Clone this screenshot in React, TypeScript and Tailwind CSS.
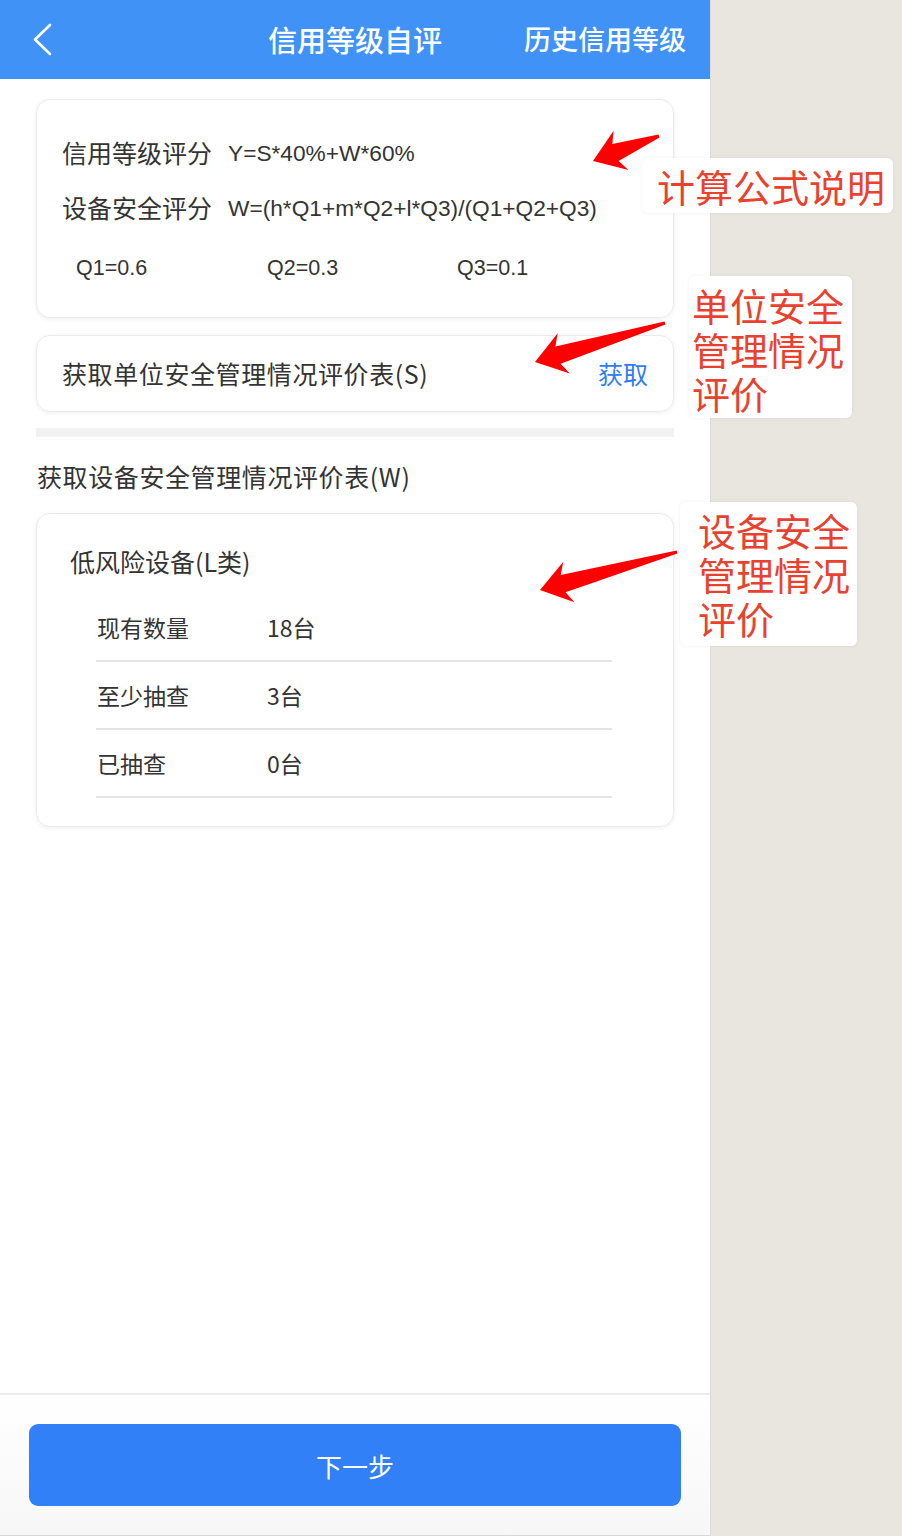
import React from 'react';

const cjk = "font-['Noto_Sans_CJK_SC',sans-serif]";
const latin = "font-['Liberation_Sans','Noto_Sans_CJK_SC',sans-serif]";

// red annotation arrow, tip -> tail, swept-back head
function arrowPoints(tip: [number, number], tail: [number, number]) {
  const dx = tail[0] - tip[0];
  const dy = tail[1] - tip[1];
  const len = Math.hypot(dx, dy);
  const ux = dx / len;
  const uy = dy / len;
  const nx = -uy;
  const ny = ux;
  const local: [number, number][] = [
    [0, 0],
    [30, -21],
    [24, -9],
    [len, -1.5],
    [len, 1.5],
    [24, 9],
    [30, 21],
  ];
  return local
    .map(([a, p]) => `${(tip[0] + ux * a + nx * p).toFixed(1)},${(tip[1] + uy * a + ny * p).toFixed(1)}`)
    .join(' ');
}

function Note({ lines, className }: { lines: string[]; className: string }) {
  return (
    <div className={`absolute bg-white rounded-[6px] shadow-[0_0_4px_rgba(0,0,0,0.06)] text-[38px] text-[#ea412e] ${cjk} ${className}`}>
      {lines.map((l) => (
        <div key={l} className="h-[44px] leading-[44px]">
          {l}
        </div>
      ))}
    </div>
  );
}

function Annotations() {
  return (
    <div className="absolute inset-0 pointer-events-none">
      <svg className="absolute inset-0" width="902" height="1536">
        <polygon points={arrowPoints([593, 161], [659, 136])} fill="#ff0000" />
        <polygon points={arrowPoints([535, 362], [665, 323])} fill="#ff0000" />
        <polygon points={arrowPoints([540, 590], [677, 552])} fill="#ff0000" />
      </svg>
      <Note lines={['计算公式说明']} className="left-[642px] top-[158px] w-[251px] h-[55px] pl-[15px] pt-[6px]" />
      <Note lines={['单位安全', '管理情况', '评价']} className="left-[689px] top-[276px] w-[163px] h-[142px] pl-[3px] pt-[7px]" />
      <Note lines={['设备安全', '管理情况', '评价']} className="left-[680px] top-[502px] w-[177px] h-[144px] pl-[18px] pt-[6px]" />
    </div>
  );
}

function Header() {
  return (
    <div className={`h-[79px] bg-[#4192f7] grid grid-cols-3 items-center text-white ${cjk}`}>
      <div className="pl-[32px] flex items-center">
        <svg width="22" height="34" viewBox="0 0 22 34">
          <polyline points="18,2 3,16.5 18,31" fill="none" stroke="#ffffff" strokeWidth="2.6" strokeLinecap="round" strokeLinejoin="round" />
        </svg>
      </div>
      <div className="text-center text-[29px] font-medium">信用等级自评</div>
      <div className="text-right pr-[24px] text-[27px] font-medium">历史信用等级</div>
    </div>
  );
}

const rows = [
  { label: '现有数量', value: '18台' },
  { label: '至少抽查', value: '3台' },
  { label: '已抽查', value: '0台' },
];

export default function App() {
  return (
    <div className="relative w-[902px] h-[1536px] bg-[#e9e6e0] flex overflow-hidden">
      <div className="w-[711px] h-[1536px] bg-white border-r border-[#dcdcdc] flex flex-col text-[#333333]">
        <Header />

        <div className="px-[36px] pt-[20px]">
          {/* formula card */}
          <div className="rounded-[14px] border border-[#ebebeb] shadow-[0_1px_4px_rgba(0,0,0,0.07)] pt-[34px] pb-[34px]">
            <div className="h-[38px] flex items-center pl-[25px]">
              <span className={`text-[25px] ${cjk}`}>信用等级评分</span>
              <span className={`ml-[16px] text-[22.7px] ${latin}`}>Y=S*40%+W*60%</span>
            </div>
            <div className="mt-[17px] h-[38px] flex items-center pl-[25px]">
              <span className={`text-[25px] ${cjk}`}>设备安全评分</span>
              <span className={`ml-[16px] text-[22.7px] ${latin}`}>W=(h*Q1+m*Q2+l*Q3)/(Q1+Q2+Q3)</span>
            </div>
            <div className={`mt-[26px] h-[30px] flex items-center pl-[39px] text-[21.5px] ${latin}`}>
              <span className="w-[191px]">Q1=0.6</span>
              <span className="w-[190px]">Q2=0.3</span>
              <span>Q3=0.1</span>
            </div>
          </div>

          {/* unit evaluation */}
          <div className="mt-[17px] h-[77px] rounded-[14px] border border-[#ebebeb] shadow-[0_1px_4px_rgba(0,0,0,0.07)] flex items-center justify-between pl-[25px] pr-[25px]">
            <span className={`text-[25px] tracking-[0.6px] ${cjk}`}>获取单位安全管理情况评价表(S)</span>
            <span className={`text-[25px] text-[#2e7cf6] ${cjk}`}>获取</span>
          </div>

          <div className="mt-[16px] h-[9px] bg-[#f2f2f2]" />

          <div className={`mt-[21px] h-[38px] flex items-center pl-[1px] text-[25px] tracking-[0.6px] ${cjk}`}>
            获取设备安全管理情况评价表(W)
          </div>

          {/* equipment card */}
          <div className="mt-[17px] rounded-[14px] border border-[#ebebeb] shadow-[0_1px_4px_rgba(0,0,0,0.07)] pt-[29px] pb-[28px]">
            <div className={`h-[38px] flex items-center pl-[33px] text-[25px] ${cjk}`}>低风险设备(L类)</div>
            <div className="mt-[13px] ml-[59px] w-[516px]">
              {rows.map((r) => (
                <div key={r.label} className="h-[68px] flex items-center border-b-2 border-[#e4e4e4]">
                  <span className={`w-[171px] pl-[1px] text-[23px] ${cjk}`}>{r.label}</span>
                  <span className={`text-[23px] ${cjk}`}>{r.value}</span>
                </div>
              ))}
            </div>
          </div>
        </div>

        {/* footer */}
        <div className="mt-auto border-t-2 border-[#ececf0] bg-gradient-to-b from-white to-[#f7f7f7] pt-[29px] pb-[29px] px-[29px] border-b border-b-[#d8d8d8]">
          <div className={`h-[82px] rounded-[9px] bg-[#3180f7] flex items-center justify-center text-white text-[26px] ${cjk}`}>
            下一步
          </div>
        </div>
      </div>

      <Annotations />
    </div>
  );
}
